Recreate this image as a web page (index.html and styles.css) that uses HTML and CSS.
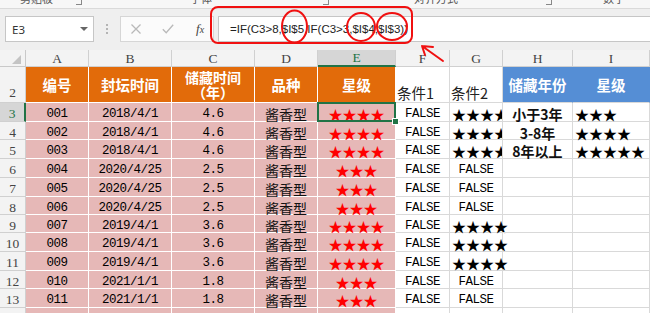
FILE: index.html
```html
<!DOCTYPE html>
<html lang="zh-CN">
<head>
<meta charset="utf-8">
<title>Excel</title>
<link rel="stylesheet" href="styles.css">
</head>
<body>
<div class="ribbon">
  <span class="rb-label w-clip">剪贴板</span>
  <span class="rb-launch g1"></span>
  <span class="rb-label w-font">字体</span>
  <span class="rb-launch g2"></span>
  <span class="rb-label w-align">对齐方式</span>
  <span class="rb-launch g3"></span>
  <span class="rb-label w-num">数字</span>
</div>
<div class="fbar">
  <div class="namebox"><span>E3</span><i class="caret"></i></div>
  <div class="grip"><b></b><b></b><b></b></div>
  <div class="fbtns">
    <svg class="ico-x" width="10" height="10" viewBox="0 0 10 10"><path d="M0.5 0.5 L9.5 9.5 M9.5 0.5 L0.5 9.5"/></svg>
    <svg class="ico-ok" width="12" height="10" viewBox="0 0 12 10"><path d="M0.8 5.2 L4.2 8.8 L11.2 0.8"/></svg>
    <span class="fx"><i>f</i><i class="fx-x">x</i></span>
  </div>
  <div class="finput">=IF(C3&gt;8,$I$5,IF(C3&gt;3,$I$4,$I$3))</div>
</div>
<div class="sheet">
  <div class="c corner"><span class="tri"></span></div>
  <div class="c ch">A</div>
  <div class="c ch">B</div>
  <div class="c ch">C</div>
  <div class="c ch">D</div>
  <div class="c ch on">E</div>
  <div class="c ch">F</div>
  <div class="c ch">G</div>
  <div class="c ch">H</div>
  <div class="c ch">I</div>

  <div class="c rh bottom">2</div>
  <div class="c or">编号</div>
  <div class="c or">封坛时间</div>
  <div class="c or"><span class="two">储藏时间<br>（年）</span></div>
  <div class="c or">品种</div>
  <div class="c or">星级</div>
  <div class="c lab">条件1</div>
  <div class="c lab">条件2</div>
  <div class="c bl">储藏年份</div>
  <div class="c bl">星级</div>

  <div class="c rh on">3</div>
  <div class="c pk n">001</div>
  <div class="c pk n">2018/4/1</div>
  <div class="c pk n">4.6</div>
  <div class="c pk z">酱香型</div>
  <div class="c pk sr sel">★★★★</div>
  <div class="c bo">FALSE</div>
  <div class="c sk clip">★★★★</div>
  <div class="c hz">小于3年</div>
  <div class="c sk">★★★</div>

  <div class="c rh">4</div>
  <div class="c pk n">002</div>
  <div class="c pk n">2018/4/1</div>
  <div class="c pk n">4.6</div>
  <div class="c pk z">酱香型</div>
  <div class="c pk sr">★★★★</div>
  <div class="c bo">FALSE</div>
  <div class="c sk clip">★★★★</div>
  <div class="c hz">3-8年</div>
  <div class="c sk">★★★★</div>

  <div class="c rh">5</div>
  <div class="c pk n">003</div>
  <div class="c pk n">2018/4/1</div>
  <div class="c pk n">4.6</div>
  <div class="c pk z">酱香型</div>
  <div class="c pk sr">★★★★</div>
  <div class="c bo">FALSE</div>
  <div class="c sk clip">★★★★</div>
  <div class="c hz">8年以上</div>
  <div class="c sk">★★★★★</div>

  <div class="c rh">6</div>
  <div class="c pk n">004</div>
  <div class="c pk n">2020/4/25</div>
  <div class="c pk n">2.5</div>
  <div class="c pk z">酱香型</div>
  <div class="c pk sr">★★★</div>
  <div class="c bo">FALSE</div>
  <div class="c bo">FALSE</div>
  <div class="c"></div>
  <div class="c"></div>

  <div class="c rh">7</div>
  <div class="c pk n">005</div>
  <div class="c pk n">2020/4/25</div>
  <div class="c pk n">2.5</div>
  <div class="c pk z">酱香型</div>
  <div class="c pk sr">★★★</div>
  <div class="c bo">FALSE</div>
  <div class="c bo">FALSE</div>
  <div class="c"></div>
  <div class="c"></div>

  <div class="c rh">8</div>
  <div class="c pk n">006</div>
  <div class="c pk n">2020/4/25</div>
  <div class="c pk n">2.5</div>
  <div class="c pk z">酱香型</div>
  <div class="c pk sr">★★★</div>
  <div class="c bo">FALSE</div>
  <div class="c bo">FALSE</div>
  <div class="c"></div>
  <div class="c"></div>

  <div class="c rh">9</div>
  <div class="c pk n">007</div>
  <div class="c pk n">2019/4/1</div>
  <div class="c pk n">3.6</div>
  <div class="c pk z">酱香型</div>
  <div class="c pk sr">★★★★</div>
  <div class="c bo">FALSE</div>
  <div class="c sk">★★★★</div>
  <div class="c"></div>
  <div class="c"></div>

  <div class="c rh">10</div>
  <div class="c pk n">008</div>
  <div class="c pk n">2019/4/1</div>
  <div class="c pk n">3.6</div>
  <div class="c pk z">酱香型</div>
  <div class="c pk sr">★★★★</div>
  <div class="c bo">FALSE</div>
  <div class="c sk">★★★★</div>
  <div class="c"></div>
  <div class="c"></div>

  <div class="c rh">11</div>
  <div class="c pk n">009</div>
  <div class="c pk n">2019/4/1</div>
  <div class="c pk n">3.6</div>
  <div class="c pk z">酱香型</div>
  <div class="c pk sr">★★★★</div>
  <div class="c bo">FALSE</div>
  <div class="c sk">★★★★</div>
  <div class="c"></div>
  <div class="c"></div>

  <div class="c rh">12</div>
  <div class="c pk n">010</div>
  <div class="c pk n">2021/1/1</div>
  <div class="c pk n">1.8</div>
  <div class="c pk z">酱香型</div>
  <div class="c pk sr">★★★</div>
  <div class="c bo">FALSE</div>
  <div class="c bo">FALSE</div>
  <div class="c"></div>
  <div class="c"></div>

  <div class="c rh">13</div>
  <div class="c pk n">011</div>
  <div class="c pk n">2021/1/1</div>
  <div class="c pk n">1.8</div>
  <div class="c pk z">酱香型</div>
  <div class="c pk sr">★★★</div>
  <div class="c bo">FALSE</div>
  <div class="c bo">FALSE</div>
  <div class="c"></div>
  <div class="c"></div>

  <div class="c rh">14</div>
  <div class="c pk n">012</div>
  <div class="c pk n">2021/1/1</div>
  <div class="c pk n">1.8</div>
  <div class="c pk z">酱香型</div>
  <div class="c pk sr">★★★</div>
  <div class="c bo">FALSE</div>
  <div class="c bo">FALSE</div>
  <div class="c"></div>
  <div class="c"></div>
</div>

<svg class="annot" width="650" height="70" viewBox="0 0 650 70">
  <rect x="211" y="7" width="201" height="36" rx="7" ry="7"/>
  <ellipse cx="294.5" cy="26.5" rx="12.5" ry="16"/>
  <ellipse cx="361" cy="27" rx="14" ry="14"/>
  <ellipse cx="392" cy="26.5" rx="15" ry="13.5"/>
  <path d="M443 61 L422 46 M422 46 L433 47 M422 46 L425 55"/>
</svg>
</body>
</html>
```

FILE: styles.css
```css
html, body {
  margin: 0;
  padding: 0;
}
body {
  width: 650px;
  height: 313px;
  overflow: hidden;
  background: #ffffff;
  font-family: "Noto Sans CJK SC", sans-serif;
  position: relative;
}

/* ribbon remnants */
.ribbon {
  height: 9px;
  box-sizing: border-box;
  background: #f7f7f7;
  border-bottom: 1px solid #dadada;
  display: flex;
  overflow: hidden;
  font-size: 11px;
  color: #555;
}
.rb-label {
  line-height: 14px;
  margin-top: -9px;
  white-space: nowrap;
  flex: 0 0 auto;
}
.rb-launch {
  flex: 0 0 auto;
  width: 5px;
  height: 6px;
  margin-top: -2px;
  border-right: 1px solid #888;
  border-bottom: 1px solid #888;
}
.w-clip { margin-left: 20px; width: 34px; }
.g1 { margin-left: 22px; }
.w-font { margin-left: 108px; width: 24px; }
.g2 { margin-left: 109px; }
.w-align { margin-left: 85px; width: 46px; }
.g3 { margin-left: 86px; }
.w-num { margin-left: 51px; width: 24px; }

/* formula bar */
.fbar {
  height: 41px;
  box-sizing: border-box;
  background: #efefef;
  display: flex;
  align-items: flex-start;
  padding-top: 7px;
}
.namebox {
  margin-left: 5px;
  width: 89px;
  height: 26px;
  box-sizing: border-box;
  background: #fff;
  border: 1px solid #c6c6c6;
  display: flex;
  align-items: center;
  justify-content: space-between;
  padding: 0 5px 0 6px;
  font-family: "Noto Sans", sans-serif;
  font-size: 11.5px;
  color: #333;
}
.caret {
  width: 0;
  height: 0;
  border-left: 4px solid transparent;
  border-right: 4px solid transparent;
  border-top: 4px solid #666;
}
.grip {
  margin-left: 12px;
  height: 26px;
  display: flex;
  flex-direction: column;
  justify-content: center;
  gap: 2px;
}
.grip b {
  display: block;
  width: 2px;
  height: 2px;
  background: #b4b4b4;
}
.fbtns {
  margin-left: 12px;
  width: 94px;
  height: 26px;
  box-sizing: border-box;
  background: #fbfbfb;
  border: 1px solid #d6d6d6;
  display: flex;
  align-items: center;
  padding-left: 10px;
}
.ico-x path, .ico-ok path {
  fill: none;
  stroke: #b9b9b9;
  stroke-width: 1.3;
}
.ico-ok { margin-left: 21px; }
.fx {
  margin-left: 22px;
  font-family: "Liberation Serif", serif;
  font-size: 13px;
  color: #444;
}
.fx-x { font-size: 10px; }
.finput {
  margin-left: 4px;
  flex: 1;
  height: 26px;
  box-sizing: border-box;
  background: #fff;
  border: 1px solid #c6c6c6;
  border-right: 0;
  display: flex;
  align-items: center;
  padding-left: 11px;
  font-family: "Liberation Sans", sans-serif;
  font-size: 11.5px;
  color: #222;
  white-space: nowrap;
}

/* grid */
.sheet {
  display: grid;
  grid-template-columns: 26px 63px 83px 83px 63px 78px 54px 53px 70px 77px;
  grid-template-rows: 17px 36px 19px 18px 19px 19px 19px 18px 18px 19px 19px 18px 19px 19px;
  background: #fff;
}
.c {
  box-sizing: border-box;
  border-right: 1px solid #d9d9d9;
  border-bottom: 1px solid #d9d9d9;
  display: flex;
  align-items: center;
  justify-content: center;
  white-space: nowrap;
  font-size: 14px;
  line-height: 14px;
  color: #111;
  padding-top: 4px;
  min-width: 0;
}
.clip {
  overflow: hidden;
}
.corner {
  background: #f3f3f3;
  border-color: #c9c9c9;
  align-items: flex-end;
  justify-content: flex-end;
  padding: 0 4px 2px 0;
}
.tri {
  width: 0;
  height: 0;
  border-left: 9px solid transparent;
  border-bottom: 9px solid #c4c4c4;
}
.ch {
  background: #f3f3f3;
  border-color: #d0d0d0;
  font-family: "Liberation Serif", serif;
  font-size: 13.5px;
  color: #444;
  padding-top: 1px;
}
.ch.on {
  background: #d6d6d6;
  color: #217346;
  border-bottom: 2px solid #217346;
}
.rh {
  background: #f3f3f3;
  border-color: #d0d0d0;
  font-family: "Liberation Serif", serif;
  font-size: 13.5px;
  color: #444;
}
.rh.on {
  background: #d6d6d6;
  color: #217346;
  border-right: 2px solid #217346;
}
.rh.bottom {
  align-items: flex-end;
  padding-bottom: 2px;
}
.or {
  background: #e26b0a;
  border-color: #ffffff;
  color: #fff;
  font-weight: bold;
  font-size: 14.5px;
  line-height: 16px;
  padding-top: 0;
}
.two {
  text-align: center;
  font-size: 14px;
  line-height: 15px;
}
.bl {
  background: #558ed5;
  border-right-color: #558ed5;
  color: #fff;
  font-weight: bold;
  font-size: 14.5px;
  line-height: 16px;
  padding-top: 0;
}
.lab {
  align-items: flex-end;
  justify-content: flex-start;
  padding: 0 0 2px 1px;
  font-size: 14.5px;
  line-height: 15px;
  color: #222;
}
.pk {
  background: #e6b8b7;
  border-color: #ffffff;
}
.n, .bo {
  font-family: "Liberation Mono", monospace;
  font-size: 12.5px;
  letter-spacing: -0.5px;
  color: #000;
}
.z {
  font-size: 14px;
}
.sr {
  color: #ff0000;
  font-size: 14px;
}
.sel {
  position: relative;
  z-index: 2;
}
.sel::after {
  content: "";
  position: absolute;
  left: -1px;
  top: -1px;
  right: -1px;
  bottom: -1px;
  border: 2px solid #217346;
}
.sel::before {
  content: "";
  position: absolute;
  right: -4px;
  bottom: -4px;
  width: 5px;
  height: 5px;
  background: #217346;
  border: 1px solid #fff;
  z-index: 1;
}
.sk {
  justify-content: flex-start;
  padding-left: 2px;
  color: #000;
}
.hz {
  font-weight: bold;
  color: #111;
}

/* annotation overlay */
.annot {
  position: absolute;
  left: 0;
  top: 0;
  pointer-events: none;
}
.annot rect, .annot ellipse, .annot path {
  fill: none;
  stroke: #f01010;
  stroke-width: 2;
  stroke-linecap: round;
}
```
